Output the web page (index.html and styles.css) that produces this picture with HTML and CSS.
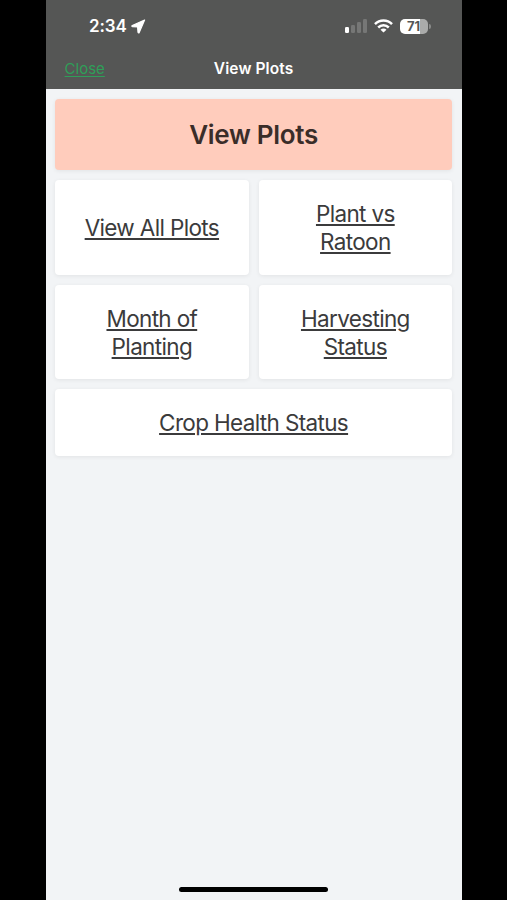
FILE: index.html
```html
<!DOCTYPE html>
<html lang="en">
<head>
<meta charset="utf-8">
<title>View Plots</title>
<link rel="stylesheet" href="styles.css">
</head>
<body>
<div class="phone">
  <header class="top">
    <div class="status">
      <div class="clock">
        <span class="time">2:34</span>
        <svg class="location" width="15" height="15" viewBox="0 0 15 15"><path d="M13.600 1 1.300 6.500c-.7.4-.5 1.200.2 1.200l5.100.3.4 5.300c.1.8.9.9 1.200.2Z" fill="#fff" stroke="#fff" stroke-width="1.200" stroke-linejoin="round"/></svg>
      </div>
      <div class="indicators">
        <svg width="22" height="14" viewBox="0 0 22 14"><rect y="8" width="4" height="6" rx="1.2" fill="#fff"/><g fill="#767776"><rect x="6" y="6" width="4" height="8" rx="1.2"/><rect x="12" y="3" width="4" height="11" rx="1.2"/><rect x="18" y="0" width="4" height="14" rx="1.2"/></g></svg>
        <svg class="wifi" width="19" height="14" viewBox="0 0 19 14"><g fill="none" stroke="#fff" stroke-width="2.500"><path d="M1 5.100C5.700.3 13.300.3 18 5.100"/><path d="M4.200 8.500c3-2.900 7.600-2.900 10.600 0"/></g><path d="m9.500 13.600-3-2.900c1.700-1.500 4.300-1.500 6 0Z" fill="#fff"/></svg>
        <div class="battery"><span>71</span></div>
        <i class="nub"></i>
      </div>
    </div>
    <nav class="nav">
      <a class="close">Close</a>
      <h1>View Plots</h1>
    </nav>
  </header>
  <main class="content">
    <h2 class="card banner"><span>View Plots</span></h2>
    <a class="card"><span>View All Plots</span></a>
    <a class="card"><span>Plant vs<br>Ratoon</span></a>
    <a class="card"><span>Month of<br>Planting</span></a>
    <a class="card"><span>Harvesting<br>Status</span></a>
    <a class="card wide"><span>Crop Health Status</span></a>
  </main>
  <div class="home"></div>
</div>
</body>
</html>
```
FILE: styles.css
```css
* { box-sizing: border-box; }
body {
  margin: 0;
  background: #000;
  font-family: Inter, "Liberation Sans", sans-serif;
}
.phone {
  width: 416px;
  height: 900px;
  margin-left: 45.600px;
  display: flex;
  flex-direction: column;
  background: #f2f4f6;
}
.top {
  height: 89px;
  background: #555655;
  color: #fff;
}
.status {
  height: 50px;
  padding: 2px 31px 0 43.400px;
  display: flex;
  align-items: center;
  justify-content: space-between;
}
.clock, .indicators { display: flex; align-items: center; }
.time { font-size: 17px; font-weight: 600; letter-spacing: -.1px; }
.location { margin-left: 4px; }
.wifi { margin-left: 7px; }
.battery {
  width: 28px;
  height: 15px;
  margin-left: 7px;
  border-radius: 5px;
  background: linear-gradient(90deg, #fff 71%, #aaabaa 71%);
  color: #555655;
  font-size: 13px;
  font-weight: 700;
  line-height: 15px;
  text-align: center;
}
.nub {
  width: 2px;
  height: 5px;
  margin-left: 1px;
  border-radius: 0 2px 2px 0;
  background: #8a8b8a;
}
.nav {
  height: 36px;
  padding: 0 19px;
  display: grid;
  grid-template-columns: 1fr auto 1fr;
  align-items: center;
}
.close {
  color: #2f9e58;
  font-size: 15px;
  text-decoration: underline;
  text-underline-offset: 2px;
}
.nav h1 {
  margin: 0;
  font-size: 15.500px;
  font-weight: 600;
  letter-spacing: .1px;
}
.content {
  padding: 10px 9.500px;
  display: grid;
  grid-template-columns: 1fr 1fr;
  grid-template-rows: 71px 95px 94px 67px;
  gap: 10px;
}
.card {
  display: flex;
  align-items: center;
  justify-content: center;
  padding-top: 1px;
  border-radius: 4px;
  background: #fff;
  box-shadow: 0 1px 4px rgba(0, 0, 0, .07);
  color: #3b3b3c;
  font-size: 22.500px;
  line-height: 28px;
  letter-spacing: -.65px;
  text-align: center;
  text-decoration: underline;
  text-decoration-thickness: 1.500px;
  text-underline-offset: 2px;
}
.banner {
  grid-column: 1 / -1;
  margin: 0;
  background: #ffccbc;
  color: #3a2d29;
  font-size: 26px;
  font-weight: 600;
  letter-spacing: -.3px;
  text-decoration: none;
}
.wide { grid-column: 1 / -1; }
.home {
  width: 149px;
  height: 5px;
  margin: auto auto 8px;
  border-radius: 3px;
  background: #000;
}
```
